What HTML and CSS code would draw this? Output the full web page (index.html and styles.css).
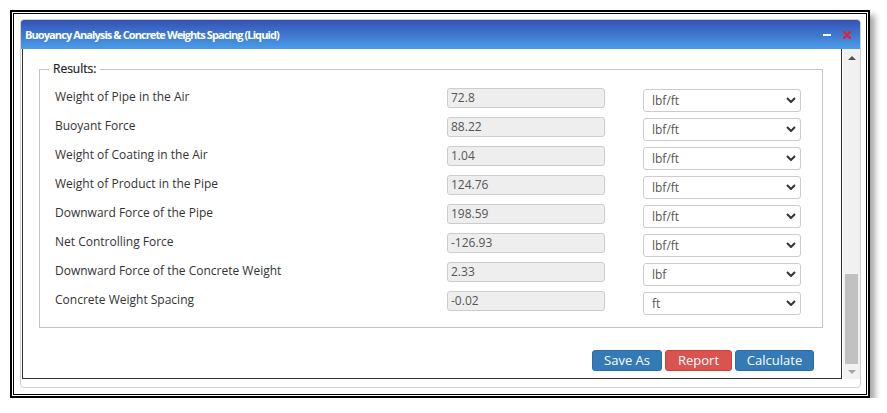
FILE: index.html
```html
<!DOCTYPE html>
<html lang="en">
<head>
  <meta charset="UTF-8" />
  <title>Buoyancy Analysis &amp; Concrete Weights Spacing (Liquid)</title>
  <link rel="stylesheet" href="styles.css">
</head>
<body>
  <div class="frame">
    <div class="dialog">
      <div class="dialog-header">
        <span class="dialog-title">Buoyancy Analysis &amp; Concrete Weights Spacing (Liquid)</span>
        <div class="dialog-tools">
          <span class="tool-min"></span>
          <svg class="tool-close" width="8" height="8" viewBox="0 0 8 8">
            <path d="M1 1 L7 7 M7 1 L1 7" stroke="#e8202e" stroke-width="2.4" stroke-linecap="round" />
          </svg>
        </div>
      </div>

      <div class="dialog-body">
        <div class="content">
          <fieldset class="results">
            <legend>Results:</legend>
            <div class="grid">
              <label>Weight of Pipe in the Air</label>
              <input class="value" value="72.8" readonly />
              <div class="unit"><select><option>lbf/ft</option></select><svg class="chev" width="10" height="6" viewBox="0 0 10 6"><path d="M1 1 L5 5 L9 1" /></svg></div>

              <label>Buoyant Force</label>
              <input class="value" value="88.22" readonly />
              <div class="unit"><select><option>lbf/ft</option></select><svg class="chev" width="10" height="6" viewBox="0 0 10 6"><path d="M1 1 L5 5 L9 1" /></svg></div>

              <label>Weight of Coating in the Air</label>
              <input class="value" value="1.04" readonly />
              <div class="unit"><select><option>lbf/ft</option></select><svg class="chev" width="10" height="6" viewBox="0 0 10 6"><path d="M1 1 L5 5 L9 1" /></svg></div>

              <label>Weight of Product in the Pipe</label>
              <input class="value" value="124.76" readonly />
              <div class="unit"><select><option>lbf/ft</option></select><svg class="chev" width="10" height="6" viewBox="0 0 10 6"><path d="M1 1 L5 5 L9 1" /></svg></div>

              <label>Downward Force of the Pipe</label>
              <input class="value" value="198.59" readonly />
              <div class="unit"><select><option>lbf/ft</option></select><svg class="chev" width="10" height="6" viewBox="0 0 10 6"><path d="M1 1 L5 5 L9 1" /></svg></div>

              <label>Net Controlling Force</label>
              <input class="value" value="-126.93" readonly />
              <div class="unit"><select><option>lbf/ft</option></select><svg class="chev" width="10" height="6" viewBox="0 0 10 6"><path d="M1 1 L5 5 L9 1" /></svg></div>

              <label>Downward Force of the Concrete Weight</label>
              <input class="value" value="2.33" readonly />
              <div class="unit"><select><option>lbf</option></select><svg class="chev" width="10" height="6" viewBox="0 0 10 6"><path d="M1 1 L5 5 L9 1" /></svg></div>

              <label>Concrete Weight Spacing</label>
              <input class="value" value="-0.02" readonly />
              <div class="unit"><select><option>ft</option></select><svg class="chev" width="10" height="6" viewBox="0 0 10 6"><path d="M1 1 L5 5 L9 1" /></svg></div>
            </div>
          </fieldset>

          <div class="actions">
            <button class="btn btn-blue btn-save">Save As</button>
            <button class="btn btn-red btn-report">Report</button>
            <button class="btn btn-blue btn-calc">Calculate</button>
          </div>
        </div>

        <!-- scrollbar drawn by hand -->
        <div class="scrollbar">
          <span class="arrow-up"></span>
          <span class="thumb"></span>
          <span class="arrow-down"></span>
        </div>
      </div>
    </div>
  </div>
</body>
</html>
```

FILE: styles.css
```css
body {
  margin: 0;
  background: #fff;
  font-family: 'Open Sans', 'Noto Sans', sans-serif;
  color: #333;
}

.frame {
  margin: 10px 0 0 10px;
  width: 860px;
  height: 388px;
  box-sizing: border-box;
  border: 2px solid #000;
  padding: 7px 0 0 8px;
  background: #fff;
  box-shadow: inset 0 0 0 1px #fff, inset 0 0 0 2px #000, 5px 5px 6px rgba(0, 0, 0, 0.35);
}

.dialog {
  width: 841px;
  height: 369px;
  box-sizing: border-box;
  border: 1px solid #cfcfcf;
  border-radius: 4px;
  display: flex;
  flex-direction: column;
  background: #fff;
}

.dialog-header {
  height: 29px;
  flex: none;
  display: flex;
  align-items: center;
  justify-content: space-between;
  padding: 0 9px 0 4px;
  border-radius: 3px 3px 0 0;
  background: linear-gradient(#3452b2, #4a9de9);
}
.dialog-title {
  color: #fff;
  font-weight: bold;
  font-size: 11px;
  letter-spacing: -0.9px;
}
.dialog-tools {
  display: flex;
  align-items: center;
  gap: 12px;
}
.tool-min {
  display: block;
  width: 8px;
  height: 2px;
  background: #fff;
}
.tool-close {
  display: block;
}

.dialog-body {
  flex: 1;
  display: flex;
  padding: 0 0 8px 1px;
  min-height: 0;
}

.content {
  width: 821px;
  box-sizing: border-box;
  border: 1px solid #333;
  border-top: none;
  padding: 11px 18px 0 16px;
}

.results {
  margin: 0;
  padding: 0 15px 13px;
  border: 1px solid #c4c4c4;
}
.results legend {
  font-size: 12px;
  line-height: 18px;
  padding: 0 4px;
  margin-left: -6px;
  color: #222;
  -webkit-text-stroke: 0.2px #222;
}

.grid {
  display: grid;
  grid-template-columns: 354px 158px 158px;
  column-gap: 38px;
  row-gap: 6px;
  padding-top: 10px;
}
.grid label {
  font-size: 12px;
  line-height: 18px;
  color: #333;
  align-self: start;
}

.value {
  height: 20px;
  box-sizing: border-box;
  width: 158px;
  border: 1px solid #ccc;
  border-radius: 3px;
  background: #eee;
  padding: 0 3px 2px;
  font-family: inherit;
  font-size: 12px;
  color: #555;
  align-self: start;
  outline: none;
}

.unit {
  position: relative;
  height: 23px;
}
.unit select {
  width: 158px;
  height: 23px;
  box-sizing: border-box;
  appearance: none;
  -webkit-appearance: none;
  border: 1px solid #ccc;
  border-radius: 3px;
  background: #fff;
  padding: 1px 8px 0;
  font-family: inherit;
  font-size: 12px;
  color: #555;
}
.chev {
  position: absolute;
  right: 5px;
  top: 9px;
  pointer-events: none;
}
.chev path {
  fill: none;
  stroke: #333;
  stroke-width: 2;
}

.actions {
  display: flex;
  justify-content: flex-end;
  gap: 3px;
  margin: 22px 9px 0 0;
}
.btn {
  height: 21px;
  box-sizing: border-box;
  border-radius: 3px;
  color: #fff;
  font-family: inherit;
  font-size: 13px;
  line-height: 17px;
  padding: 0;
  cursor: pointer;
}
.btn-blue {
  background: #337ab7;
  border: 1px solid #2e6da4;
}
.btn-red {
  background: #d9534f;
  border: 1px solid #d43f3a;
}
.btn-save { width: 70px; }
.btn-report { width: 67px; }
.btn-calc { width: 79px; }

.scrollbar {
  width: 17px;
  margin-left: 1px;
  background: #f1f1f1;
  display: flex;
  flex-direction: column;
  align-items: center;
}
.arrow-up {
  margin-top: 7px;
  border-left: 4px solid transparent;
  border-right: 4px solid transparent;
  border-bottom: 4px solid #505050;
}
.thumb {
  margin-top: auto;
  width: 13px;
  height: 90px;
  background: #c1c1c1;
}
.arrow-down {
  margin: 6px 0 5px;
  border-left: 4px solid transparent;
  border-right: 4px solid transparent;
  border-top: 4px solid #a3a3a3;
}
```
